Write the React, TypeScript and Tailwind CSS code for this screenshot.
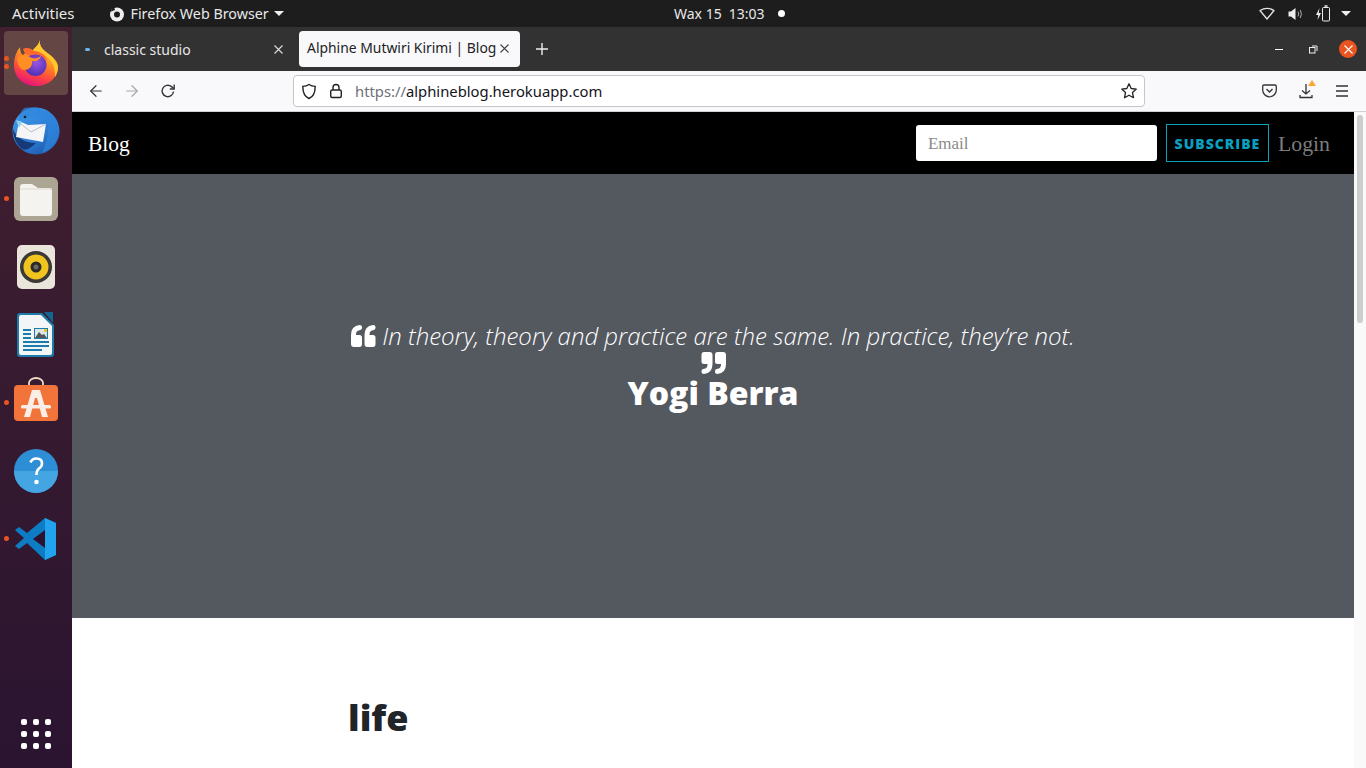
import { FiArrowLeft, FiArrowRight } from 'react-icons/fi';

const UI = { fontFamily: '"Noto Sans", "Open Sans", sans-serif' };

function QuoteMark({ flip }: { flip?: boolean }) {
  const glyph = 'M3 22Q0 22 0 19V10Q0 1 8.5 0Q11 0 11 2V3Q11 5 8.5 5.2Q5 5.6 5 9.5V10H8.5Q11 10 11 12.5V19Q11 22 8.5 22Z';
  return (
    <svg width="25" height="22" viewBox="0 0 25 22" fill="#fff" className={flip ? 'rotate-180' : ''}>
      <path d={glyph} />
      <path d={glyph} transform="translate(13.5 0)" />
    </svg>
  );
}

function FirefoxIcon() {
  return (
    <svg width="46" height="46" viewBox="0 0 46 46">
      <defs>
        <linearGradient id="ff1" x1="0.75" y1="0" x2="0.35" y2="1">
          <stop offset="0" stopColor="#ffe14a" />
          <stop offset="0.4" stopColor="#ff9a1f" />
          <stop offset="0.72" stopColor="#ff4a3c" />
          <stop offset="1" stopColor="#e5127e" />
        </linearGradient>
        <radialGradient id="ff2" cx="0.55" cy="0.4" r="0.65">
          <stop offset="0" stopColor="#9a55e0" />
          <stop offset="1" stopColor="#4a2bb0" />
        </radialGradient>
      </defs>
      <path d="M27 0C26 5 29 9 33 12C40 17 45 21 45 27C45 38 35 46 23 46C10 46 1 37 1 25C1 18 3 12 7 7C7 11 8 14 10 15C13 12 16 10 20 10C24 6 26 4 27 0Z" fill="url(#ff1)" />
      <circle cx="22.5" cy="25" r="11" fill="url(#ff2)" />
      <path d="M27 0C26 5 29 9 33 12C39 17 44 21 45 27C45 30 44 34 42 37C43 27 38 18 30 14C26 12 22 11 20 10C24 6 26 4 27 0Z" fill="#ffc62e" />
      <path d="M4 18C9 14 14 15 17 17C20 19 24 19 28 16C27 20 23 22 19 21C20 25 17 30 11 30C8 30 5 27 4 18Z" fill="#ff8f24" />
      <path d="M10 9C13 7 18 8 21 11C27 11 33 15 35 22C31 16 25 13 19 15C15 16 12 15 10 9Z" fill="#ff6a2c" />
    </svg>
  );
}

function ThunderbirdIcon() {
  return (
    <svg width="48" height="48" viewBox="0 0 48 48">
      <defs>
        <linearGradient id="tb1" x1="0.2" y1="0" x2="0.9" y2="1">
          <stop offset="0" stopColor="#3f9ae8" />
          <stop offset="0.6" stopColor="#2a78d2" />
          <stop offset="1" stopColor="#1b4f9e" />
        </linearGradient>
      </defs>
      <circle cx="24" cy="24" r="23.5" fill="url(#tb1)" />
      <path d="M1 22C4 30 12 36 24 36C19 41 14 44 10 42C4 37 1 30 1 22Z" fill="#163a78" />
      <path d="M12 1C8 5 7 9 7 13C14 9 26 8 34 13C38 18 37 30 30 46C40 43 47 34 47.5 24C47 14 40 5 30 2C24 0 18 0 12 1Z" fill="#2f86dd" opacity="0.7" />
      <path d="M7 14L16 18L34 17L31 35L4 30Z" fill="#f5f5f7" />
      <path d="M9 17L19 25L34 17" fill="none" stroke="#b4b8c2" strokeWidth="0.9" />
      <path d="M4 13L10 15L7 21Z" fill="#8fd2ef" />
      <circle cx="13" cy="10" r="1.3" fill="#123" />
    </svg>
  );
}

function FilesIcon() {
  return (
    <svg width="44" height="44" viewBox="0 0 44 44">
      <rect width="44" height="44" rx="6" fill="#aca594" />
      <path d="M6 10a3 3 0 0 1 3-3h9l6 4h11a3 3 0 0 1 3 3v22a3 3 0 0 1-3 3H9a3 3 0 0 1-3-3z" fill="#f5f3ef" />
      <path d="M6 12h32" stroke="#dcd8cf" strokeWidth="1" />
    </svg>
  );
}

function RhythmboxIcon() {
  return (
    <svg width="38" height="44" viewBox="0 0 38 44">
      <rect width="38" height="44" rx="5" fill="#e9e5da" />
      <circle cx="19" cy="22" r="16" fill="#3b3936" />
      <circle cx="19" cy="22" r="12.5" fill="#f2c41f" />
      <circle cx="19" cy="22" r="5.5" fill="#2b2a28" />
      <circle cx="19" cy="22" r="2.5" fill="#6b6862" />
    </svg>
  );
}

function WriterIcon() {
  return (
    <svg width="38" height="46" viewBox="0 0 38 46">
      <path d="M3 1h22l12 12v29a3 3 0 0 1-3 3H3a3 3 0 0 1-3-3V4a3 3 0 0 1 3-3z" fill="#1c7cab" />
      <path d="M4 3h20l11 11v27a2 2 0 0 1-2 2H4a2 2 0 0 1-2-2V5a2 2 0 0 1 2-2z" fill="#f3f5f6" />
      <path d="M27 0h9v11z" fill="#12668f" />
      <path d="M6 17h8v2H6zM6 21h8v2H6zM6 25h8v2H6zM6 29h26v2H6zM6 33h26v2H6zM6 37h19v2H6z" fill="#1c7cab" />
      <rect x="17" y="16" width="14" height="11" fill="#1c7cab" />
      <rect x="18" y="17" width="12" height="9" fill="#dfe6ea" />
      <path d="M18 26l4-6 3 3 2-1 3 4z" fill="#555" />
      <rect x="27" y="17" width="3" height="3" fill="#f2c41f" />
    </svg>
  );
}

function StoreIcon() {
  return (
    <svg width="46" height="46" viewBox="0 0 46 46" className="overflow-visible">
      <path d="M16 6V3a7 5 0 0 1 14 0v3" fill="none" stroke="#f0dcc4" strokeWidth="1.8" />
      <rect x="1" y="5" width="44" height="36" rx="4" fill="#f3743a" />
      <path d="M19 10h8l8 27h-6l-5-19h-2l-5 19h-6z" fill="#fbeee6" />
      <rect x="8" y="25" width="30" height="3.5" rx="1.5" fill="#fbeee6" />
    </svg>
  );
}

function HelpIcon() {
  return (
    <svg width="44" height="44" viewBox="0 0 44 44">
      <circle cx="22" cy="22" r="22" fill="#2d8ed6" />
      <path d="M0 22a22 22 0 0 0 44 0z" fill="#45a5e2" />
      <path d="M16.5 13.500Q18 9.500 22.500 9.500Q28 9.500 28 14.500Q28 17.500 25 19.500Q22.500 21.500 22.500 26" fill="none" stroke="#fff" strokeWidth="2.6" />
      <circle cx="22.5" cy="33" r="2.3" fill="#fff" />
    </svg>
  );
}

function VSCodeIcon() {
  return (
    <svg width="44" height="44" viewBox="0 0 44 44">
      <path d="M31 1l11 5v32l-11 5-18-17-8 6-4-3 9-8-9-8 4-3 8 6z" fill="#0e7cc4" />
      <path d="M31 1l11 5v32l-11 5z" fill="#22a3ee" />
      <path d="M31 13L19 22l12 9z" fill="#2b1330" />
    </svg>
  );
}

function Dots({ n, top }: { n: number; top: string }) {
  return (
    <div className={`absolute left-[4px] flex flex-col gap-[3px] ${top}`}>
      {Array.from({ length: n }).map((_, i) => (
        <div key={i} className="w-[5px] h-[5px] rounded-full bg-[#e95420]" />
      ))}
    </div>
  );
}

function Dock() {
  return (
    <aside className="w-[72px] shrink-0 bg-gradient-to-b from-[#43202f] to-[#2a1430] flex flex-col items-center relative">
      <div className="w-[64px] h-[64px] mt-[4px] mb-[2px] rounded-[4px] bg-[#644644] flex items-center justify-center"><FirefoxIcon /></div>
      <Dots n={2} top="top-[29px]" />
      <div className="h-[68px] flex items-center justify-center"><ThunderbirdIcon /></div>
      <div className="h-[68px] flex items-center justify-center"><FilesIcon /></div>
      <Dots n={1} top="top-[169px]" />
      <div className="h-[68px] flex items-center justify-center"><RhythmboxIcon /></div>
      <div className="h-[68px] flex items-center justify-center"><WriterIcon /></div>
      <div className="h-[68px] flex items-center justify-center"><StoreIcon /></div>
      <Dots n={1} top="top-[373px]" />
      <div className="h-[68px] flex items-center justify-center"><HelpIcon /></div>
      <div className="h-[68px] flex items-center justify-center"><VSCodeIcon /></div>
      <Dots n={1} top="top-[509px]" />
      <div className="mt-auto mb-[19px] grid grid-cols-3 gap-[6px]">
        {Array.from({ length: 9 }).map((_, i) => (
          <div key={i} className="w-[6px] h-[6px] rounded-[2px] bg-white" />
        ))}
      </div>
    </aside>
  );
}

function TopBar() {
  return (
    <header className="h-[27px] shrink-0 bg-[#1d1d1d] text-[#e8e8e8] text-[14px] flex items-center relative" style={UI}>
      <span className="ml-[12px] text-[15px]">Activities</span>
      <svg width="16" height="16" viewBox="0 0 16 16" className="ml-[34px]">
        <circle cx="8" cy="8.5" r="7" fill="#eee" />
        <circle cx="8" cy="8.5" r="3" fill="#1d1d1d" />
        <path d="M1 6l4-5 1 3z" fill="#1d1d1d" />
      </svg>
      <span className="ml-[6px] text-[14.3px]">Firefox Web Browser</span>
      <div className="ml-[5px] w-0 h-0 border-x-[5px] border-x-transparent border-t-[5px] border-t-[#eee]" />
      <div className="absolute left-[674px] flex items-center">
        <span>Wax 15</span>
        <span className="ml-[7px]">13:03</span>
        <div className="ml-[14px] w-[7px] h-[7px] rounded-full bg-white" />
      </div>
      <div className="ml-auto mr-[15px] flex items-center">
        <svg width="16" height="13" viewBox="0 0 16 13" fill="none" stroke="#e4e4e4" strokeWidth="1.3" strokeLinejoin="round">
          <path d="M1 3.500Q8 -0.800 15 3.500L8 12Z" />
        </svg>
        <svg width="15" height="14" viewBox="0 0 15 14" className="ml-[13px]">
          <path d="M0.500 4.500H3L7.500 1V13L3 9.500H0.500Z" fill="#eee" />
          <path d="M10 4.500Q11.500 7 10 9.500M12.300 3Q14.500 7 12.300 11" fill="none" stroke="#aaa" strokeWidth="1" />
        </svg>
        <svg width="16" height="17" viewBox="0 0 16 17" className="ml-[12px]" fill="none" stroke="#eee">
          <rect x="7.5" y="2.5" width="7" height="13.5" rx="1" />
          <path d="M9.500 1h3" strokeWidth="1.5" />
          <path d="M4.500 3L1 10H3.300L2.500 15L6 8H3.700z" fill="#eee" stroke="none" />
        </svg>
        <div className="ml-[10px] w-0 h-0 border-x-[5px] border-x-transparent border-t-[5px] border-t-[#eee]" />
      </div>
    </header>
  );
}

function CloseX({ color }: { color: string }) {
  return (
    <svg width="9" height="9" viewBox="0 0 9 9" stroke={color} strokeWidth="1.1" className="block">
      <path d="M0.500 0.500l8 8M8.500 0.500l-8 8" />
    </svg>
  );
}

function TabBar() {
  return (
    <div className="h-[44px] shrink-0 bg-[#333233] flex items-center text-[14px] text-[#e6e6e6]" style={UI}>
      <div className="w-[219px] h-full flex items-center pl-[13px] pr-[8px]">
        <div className="w-[5px] h-[3px] rounded-full bg-[#6cb8ee]" />
        <span className="ml-[14px]">classic studio</span>
        <span className="ml-auto"><CloseX color="#ddd" /></span>
      </div>
      <div className="w-[221px] h-[36px] mt-[-1px] ml-[8px] bg-[#f9f9fb] rounded-[4px] flex items-center pl-[8px] pr-[11px] text-[#222] text-[13.9px] whitespace-nowrap overflow-hidden">
        <span>Alphine Mutwiri Kirimi | Blog</span>
        <span className="ml-auto"><CloseX color="#444" /></span>
      </div>
      <svg width="14" height="14" viewBox="0 0 14 14" className="ml-[15px]" stroke="#eee" strokeWidth="1.4">
        <path d="M7 1v12M1 7h12" />
      </svg>
      <div className="ml-auto flex items-center">
        <div className="w-[8px] h-px bg-white" />
        <svg width="9" height="9" viewBox="0 0 9 9" className="ml-[26px]" fill="none" stroke="#eee">
          <rect x="0.5" y="2.5" width="5.5" height="5.5" />
          <path d="M3 1h5v5" />
        </svg>
        <div className="ml-[21px] mr-[9px] w-[18px] h-[18px] rounded-full bg-[#e95420] flex items-center justify-center">
          <CloseX color="#fff" />
        </div>
      </div>
    </div>
  );
}

function Toolbar() {
  return (
    <div className="h-[41px] shrink-0 bg-[#f9f9fb] border-b border-[#cfcfd4] flex items-center text-[#333]" style={UI}>
      <FiArrowLeft size={18} strokeWidth={1.6} className="ml-[15px]" />
      <FiArrowRight size={18} strokeWidth={1.6} className="ml-[18px] text-[#a8a8ac]" />
      <svg width="16" height="16" viewBox="0 0 16 16" className="ml-[19px]" fill="none" stroke="#333" strokeWidth="1.4">
        <path d="M13.500 8.500A5.700 5.700 0 1 1 11.500 3.600L14 5.500" />
        <path d="M14.200 1.500v4.500H9.800" strokeWidth="1.3" />
      </svg>
      <div className="w-[852px] h-[32px] ml-[117px] bg-white border border-[#c6c6c9] rounded-[4px] flex items-center">
        <svg width="16" height="17" viewBox="0 0 16 17" className="ml-[7px]" fill="none" stroke="#222" strokeWidth="1.4">
          <path d="M8 1.500c2 1.300 4 1.800 6.200 1.900 0 6-1.500 10-6.200 12.100C3.300 13.400 1.800 9.400 1.800 3.400 4 3.300 6 2.800 8 1.500z" />
        </svg>
        <svg width="14" height="16" viewBox="0 0 14 16" className="ml-[12px]" fill="none" stroke="#222" strokeWidth="1.4">
          <rect x="1.7" y="7" width="10.6" height="7.5" rx="1.5" />
          <path d="M4 7V4.500a3 3 0 0 1 6 0V7" />
        </svg>
        <span className="ml-[12px] pt-[1px] text-[14.8px]">
          <span className="text-[#70707a]">https://</span><span className="text-[#15141a]">alphineblog.herokuapp.com</span>
        </span>
        <svg width="18" height="18" viewBox="0 0 18 18" className="ml-auto mr-[6px]" fill="none" stroke="#222" strokeWidth="1.3" strokeLinejoin="round">
          <path d="M9 1.800l2.200 4.700 5.100.6-3.800 3.500 1 5.100L9 13.200l-4.500 2.500 1-5.100-3.800-3.500 5.100-.6z" />
        </svg>
      </div>
      <div className="ml-auto flex items-center mr-[17px]">
        <svg width="15" height="14" viewBox="0 0 15 14" fill="none" stroke="#333" strokeWidth="1.3">
          <path d="M2 1h11a1.300 1.300 0 0 1 1.300 1.300V6A6.800 6.800 0 0 1 .7 6V2.300A1.300 1.300 0 0 1 2 1z" />
          <path d="M4.500 5l3 3 3-3" />
        </svg>
        <div className="relative ml-[22px]">
          <svg width="14" height="16" viewBox="0 0 14 16" fill="none" stroke="#333" strokeWidth="1.3" className="block">
            <path d="M7 1v10M3 7.500L7 11l4-3.500M1 12v2.500h12V12" />
          </svg>
          <div className="absolute -top-[3px] left-[9px] w-0 h-0 border-x-[4px] border-x-transparent border-b-[6px] border-b-[#ffa436]" />
        </div>
        <svg width="14" height="12" viewBox="0 0 14 12" stroke="#333" strokeWidth="1.3" className="ml-[22px]">
          <path d="M1 1h12M1 6h12M1 11h12" />
        </svg>
      </div>
    </div>
  );
}

export default function App() {
  return (
    <div className="w-[1366px] h-[768px] overflow-hidden flex flex-col">
      <TopBar />
      <div className="flex-1 flex min-h-0">
        <Dock />
        <div className="flex-1 flex flex-col min-w-0">
          <TabBar />
          <Toolbar />
          <div className="flex-1 flex min-h-0">
            <main className="flex-1 min-w-0 flex flex-col" style={{ fontFamily: '"Open Sans", sans-serif' }}>
              <nav className="h-[62px] shrink-0 bg-black flex items-center" style={{ fontFamily: '"Liberation Serif", serif' }}>
                <span className="ml-[16px] mt-[2px] text-white text-[21.5px]">Blog</span>
                <div className="ml-auto w-[241px] h-[36px] bg-white rounded-[3px] flex items-center pl-[12px] pt-[1px] text-[#8a8a8a] text-[17px]">Email</div>
                <div className="ml-[9px] w-[103px] h-[38px] border border-[#0b9fc0] flex items-center justify-center text-[#0b9fc0] text-[14px] font-extrabold tracking-[1px]" style={{ fontFamily: '"Open Sans", sans-serif' }}>SUBSCRIBE</div>
                <span className="ml-[9px] mr-[24px] mt-[2px] text-[#7c7c7c] text-[21.8px]">Login</span>
              </nav>
              <section className="h-[444px] shrink-0 bg-[#54585f] flex flex-col items-center text-white pt-[145px]">
                <p className="flex items-center h-[33px] text-[24px] font-light italic whitespace-nowrap">
                  <QuoteMark />
                  <span className="ml-[6px]">In theory, theory and practice are the same. In practice, they’re not.</span>
                </p>
                <div className="h-[21px] flex items-center"><QuoteMark flip /></div>
                <h2 className="text-[32px] font-extrabold leading-[44px] -mt-[2px]">Yogi Berra</h2>
              </section>
              <section className="flex-1 bg-white pl-[276px] pt-[75px]">
                <h1 className="text-[36px] font-extrabold leading-[50px] text-[#212529]">life</h1>
              </section>
            </main>
            <div className="w-[12px] shrink-0 bg-[#f9f9f9] pt-[3px] flex justify-center">
              <div className="w-[6px] h-[208px] rounded-full bg-[#cdcdcd]" />
            </div>
          </div>
        </div>
      </div>
    </div>
  );
}
